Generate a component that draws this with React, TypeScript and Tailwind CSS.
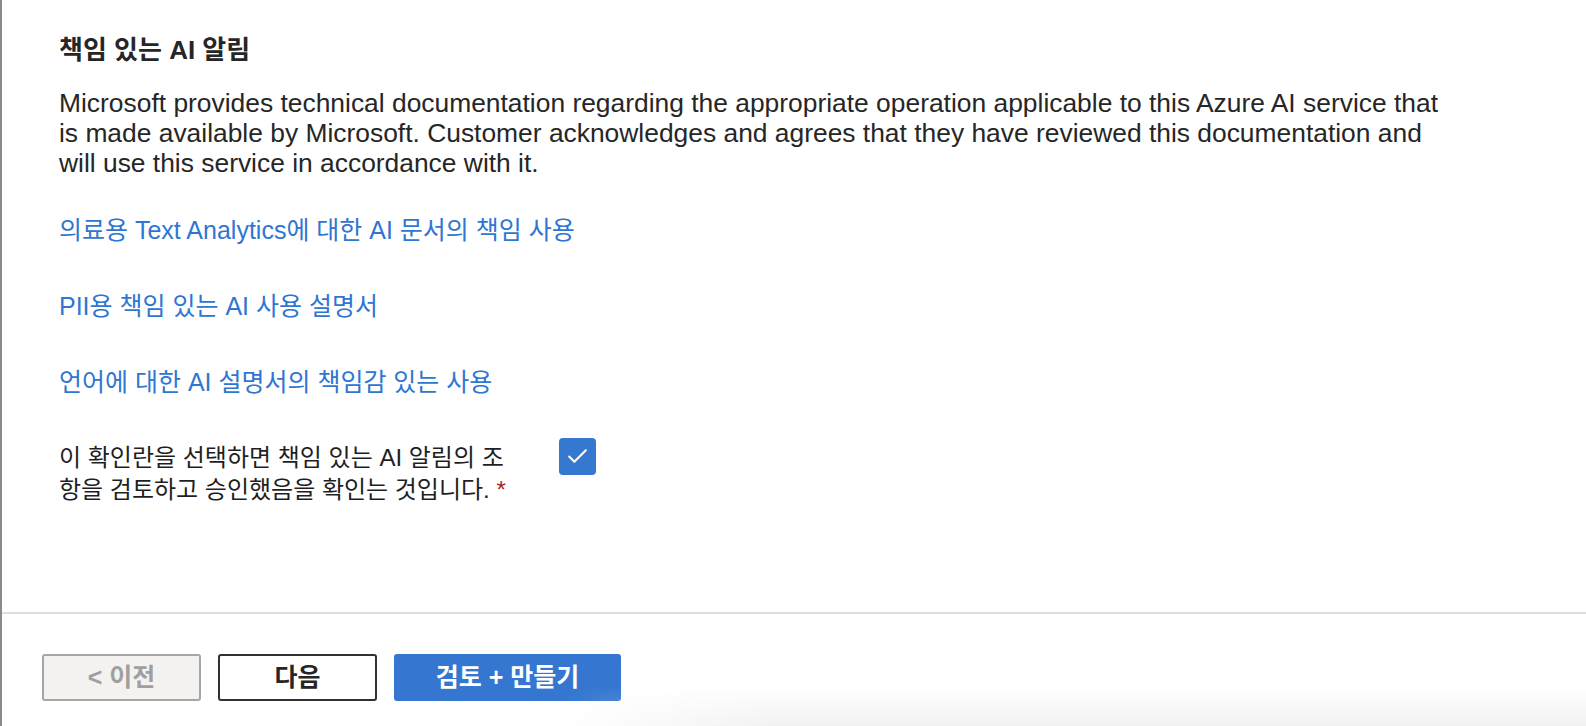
import { Check } from "lucide-react";

const font = "font-['Liberation_Sans','Noto_Sans_CJK_KR',sans-serif]";

const links = [
  "의료용 Text Analytics에 대한 AI 문서의 책임 사용",
  "PII용 책임 있는 AI 사용 설명서",
  "언어에 대한 AI 설명서의 책임감 있는 사용",
];

export default function App() {
  return (
    <div className={`relative h-[726px] w-[1586px] overflow-hidden bg-white border-l-2 border-[#8a8a8a] text-[#262626] ${font}`}>
      <main className="h-[612px] pl-[57px] pt-[34px]">
        <h2 className="text-[26px] font-bold leading-[32px]">책임 있는 AI 알림</h2>

        <p className="mt-[22px] w-[1396px] text-[26.4px] leading-[30px]">
          Microsoft provides technical documentation regarding the appropriate operation applicable to this Azure AI
          service that is made available by Microsoft. Customer acknowledges and agrees that they have reviewed this
          documentation and will use this service in accordance with it.
        </p>

        <ul className="mt-[37px] flex flex-col gap-[45px]">
          {links.map((l) => (
            <li key={l}>
              <a className="text-[25px] leading-[31px] text-[#2f76d2] cursor-pointer">{l}</a>
            </li>
          ))}
        </ul>

        <div className="mt-[44px] flex items-start gap-[34px]">
          <p className="w-[466px] text-[24px] leading-[32px] text-[#1f1f1f]">
            이 확인란을 선택하면 책임 있는 AI 알림의 조항을 검토하고 승인했음을 확인는 것입니다.{" "}
            <span className="text-[#a4262c]">*</span>
          </p>
          <span className="mt-[-4px] flex h-[37px] w-[37px] items-center justify-center rounded-[4px] bg-[#3578d0]">
            <Check className="h-[25px] w-[25px] text-white" strokeWidth={2} />
          </span>
        </div>
      </main>

      <footer className="border-t-2 border-[#dedede] pl-[40px] pt-[40px]">
        <div className="flex gap-[17px]">
          <button className="h-[47px] w-[159px] rounded-[3px] border-2 border-[#a6a6a6] bg-[#f3f2f1] text-[25px] font-bold text-[#a19f9d]">
            &lt; 이전
          </button>
          <button className="h-[47px] w-[159px] rounded-[3px] border-2 border-[#323130] bg-white text-[25px] font-bold text-[#262626]">
            다음
          </button>
          <button className="h-[47px] w-[227px] rounded-[3px] bg-[#3577d0] text-[25px] font-bold text-white">
            검토 + 만들기
          </button>
        </div>
      </footer>

      <div className="pointer-events-none absolute bottom-0 left-[560px] right-0 h-[40px] bg-gradient-to-b from-white/0 to-[#f2f2f2] [mask-image:linear-gradient(to_right,transparent,black_20%)]" />
    </div>
  );
}
